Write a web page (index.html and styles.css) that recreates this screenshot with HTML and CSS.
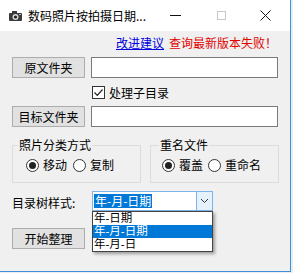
FILE: index.html
```html
<!DOCTYPE html>
<html>
<head>
<meta charset="utf-8">
<link rel="stylesheet" href="styles.css">
</head>
<body>
<div class="win">
  <div class="titlebar">
    <svg class="appicon" width="15" height="12" viewBox="0 0 15 12">
      <rect x="1" y="3" width="13" height="8" rx="1" fill="#3a3a3a"/>
      <rect x="4" y="1" width="5" height="3" fill="#3a3a3a"/>
      <circle cx="7.5" cy="7" r="3" fill="#d8d8d8"/>
      <circle cx="7.5" cy="7" r="1.6" fill="#222"/>
      <rect x="11" y="4" width="2" height="1" fill="#bbb"/>
    </svg>
    <span class="title">数码照片按拍摄日期...</span>
    <div class="controls">
      <span class="ctl min"><span class="minline"></span></span>
      <span class="ctl max"><span class="maxbox"></span></span>
      <span class="ctl close">
        <svg width="11" height="11" viewBox="0 0 11 11"><path d="M0.5 0.5L10.5 10.5M10.5 0.5L0.5 10.5" stroke="#111" stroke-width="1"/></svg>
      </span>
    </div>
  </div>
  <div class="client">
    <div class="links">
      <span class="link">改进建议</span>
      <span class="err">查询最新版本失败！</span>
    </div>
    <div class="row r1">
      <span class="btn">原文件夹</span>
      <span class="input"></span>
    </div>
    <div class="row chkrow">
      <span class="chk">
        <svg width="11" height="11" viewBox="0 0 11 11"><path d="M1.5 5.5L4.3 8.3L9.5 2.5" fill="none" stroke="#222" stroke-width="1.2"/></svg>
      </span>
      <span class="chklabel">处理子目录</span>
    </div>
    <div class="row r2">
      <span class="btn">目标文件夹</span>
      <span class="input"></span>
    </div>
    <div class="groups">
      <fieldset class="grp g1">
        <legend>照片分类方式</legend>
        <div class="radios">
          <span class="opt"><span class="radio on"></span>移动</span>
          <span class="opt"><span class="radio"></span>复制</span>
        </div>
      </fieldset>
      <fieldset class="grp g2">
        <legend>重名文件</legend>
        <div class="radios">
          <span class="opt"><span class="radio on"></span>覆盖</span>
          <span class="opt"><span class="radio"></span>重命名</span>
        </div>
      </fieldset>
    </div>
    <div class="row comborow">
      <span class="lbl">目录树样式:</span>
      <div class="combo">
        <span class="cval"><span class="sel">年-月-日期</span></span>
        <span class="carrow">
          <svg width="9" height="6" viewBox="0 0 9 6"><path d="M1 1L4.5 4.5L8 1" fill="none" stroke="#333" stroke-width="1"/></svg>
        </span>
        <div class="dropdown">
          <div class="item">年-日期</div>
          <div class="item hi">年-月-日期</div>
          <div class="item">年-月-日</div>
        </div>
      </div>
    </div>
    <div class="row startrow">
      <span class="btn">开始整理</span>
    </div>
  </div>
</div>
</body>
</html>
```

FILE: styles.css
```css
* { box-sizing: border-box; }
html, body {
  margin: 0;
  padding: 0;
  width: 293px;
  height: 273px;
  background: #e9eef3;
  overflow: hidden;
  font-family: "Noto Sans CJK SC", "Noto Sans", sans-serif;
  font-size: 12px;
  color: #000;
}
.win {
  width: 291px;
  height: 272px;
  border-right: 1px solid #3f8fd6;
  border-bottom: 1px solid #3f8fd6;
  background: #f0f0f0;
  display: flex;
  flex-direction: column;
}
.titlebar {
  height: 31px;
  background: #fff;
  display: flex;
  align-items: center;
  padding-left: 8px;
  flex-shrink: 0;
}
.title {
  margin-left: 5px;
  font-size: 12px;
  line-height: 14px;
  color: #000;
}
.controls {
  margin-left: auto;
  display: flex;
  height: 31px;
}
.ctl {
  width: 46px;
  height: 31px;
  display: flex;
  align-items: center;
  justify-content: center;
}
.minline {
  width: 11px;
  height: 1px;
  background: #111;
}
.maxbox {
  width: 9px;
  height: 9px;
  border: 1px solid #c8c8c8;
}
.close { padding-right: 3px; }
.client {
  flex: 1;
  padding: 5px 0 0 12px;
  display: flex;
  flex-direction: column;
}
.links {
  display: flex;
  justify-content: flex-end;
  padding-right: 13px;
  line-height: 14px;
  height: 14px;
  gap: 5px;
}
.link {
  color: #0000e0;
  text-decoration: underline;
}
.err { color: #e00000; }
.row {
  display: flex;
  align-items: center;
}
.r1 { margin-top: 7px; }
.btn {
  width: 73px;
  height: 21px;
  background: #e1e1e1;
  border: 1px solid #adadad;
  display: flex;
  align-items: center;
  justify-content: center;
  line-height: 14px;
}
.input {
  width: 187px;
  height: 21px;
  margin-left: 6px;
  background: #fff;
  border: 1px solid #7a7a7a;
}
.chkrow {
  margin-top: 8px;
  padding-left: 80px;
  height: 13px;
}
.chk {
  width: 13px;
  height: 13px;
  border: 1px solid #333;
  background: #fff;
  display: flex;
  align-items: center;
  justify-content: center;
}
.chklabel { margin-left: 4px; line-height: 14px; }
.r2 { margin-top: 7px; }
.groups {
  display: flex;
  gap: 9px;
  margin-top: 11px;
}
.grp {
  margin: 0;
  padding: 0 0 7px 0;
  border: 1px solid #dcdcdc;
  width: 129px;
  height: 45px;
  min-width: 0;
}
.grp legend {
  padding: 0 1px;
  margin-left: 5px;
  line-height: 14px;
  font-size: 12px;
}
.g2 legend { margin-left: 8px; }
.radios {
  display: flex;
  align-items: center;
  margin-top: 6px;
  padding-left: 13px;
  gap: 6px;
}
.g2 .radios { padding-left: 11px; gap: 5px; }
.opt {
  display: flex;
  align-items: center;
  line-height: 14px;
}
.radio {
  width: 13px;
  height: 13px;
  border: 1px solid #333;
  border-radius: 50%;
  background: #fff;
  margin-right: 4px;
  display: flex;
  align-items: center;
  justify-content: center;
}
.radio.on::after {
  content: "";
  width: 7px;
  height: 7px;
  border-radius: 50%;
  background: #222;
}
.comborow { margin-top: 8px; }
.lbl {
  width: 80px;
  margin-top: 4px;
  line-height: 14px;
}
.combo {
  position: relative;
  width: 121px;
  height: 20px;
  border: 1px solid #7eb4ea;
  background: #fff;
  display: flex;
}
.cval {
  flex: 1;
  padding: 2px 0 0 1px;
  line-height: 14px;
}
.sel {
  background: #0078d7;
  color: #fff;
  padding: 0 1px;
  display: inline-block;
  line-height: 14px;
}
.carrow {
  width: 16px;
  height: 18px;
  background: #e5f1fb;
  border-left: 1px solid #7eb4ea;
  display: flex;
  align-items: center;
  justify-content: center;
}
.dropdown {
  position: absolute;
  left: -1px;
  top: 19px;
  width: 121px;
  height: 41px;
  background: #fff;
  border: 1px solid #444;
  box-shadow: 2px 2px 3px rgba(0,0,0,0.35);
  z-index: 5;
}
.item {
  height: 13px;
  line-height: 13px;
  font-family: "Liberation Sans", "Noto Sans CJK SC", sans-serif;
  font-size: 11.5px;
  padding-left: 1px;
}
.item.hi {
  background: #0078d7;
  color: #fff;
}
.startrow { margin-top: 17px; }
```
